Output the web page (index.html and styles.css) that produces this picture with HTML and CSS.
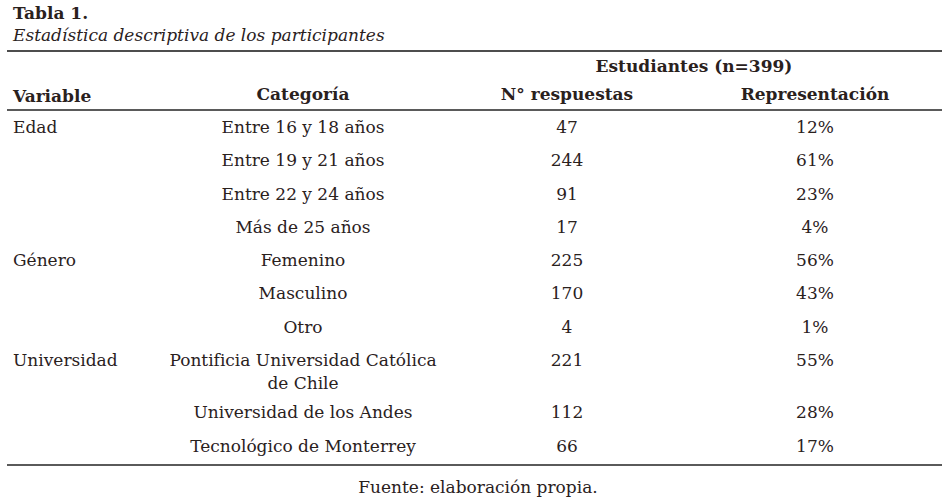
FILE: index.html
```html
<!DOCTYPE html>
<html lang="es">
<head>
<meta charset="utf-8">
<link rel="stylesheet" href="styles.css">
<title>Tabla 1</title>
</head>
<body>
<div class="page">
  <div class="caption">
    <div class="cap-title">Tabla 1.</div>
    <div class="cap-sub">Estadística descriptiva de los participantes</div>
  </div>
  <table class="tbl">
    <colgroup>
      <col class="c1"><col class="c2"><col class="c3"><col class="c4">
    </colgroup>
    <thead>
      <tr class="h1">
        <th></th><th></th>
        <th colspan="2" class="group">Estudiantes (n=399)</th>
      </tr>
      <tr class="h2">
        <th class="left var">Variable</th>
        <th>Categoría</th>
        <th>N° respuestas</th>
        <th>Representación</th>
      </tr>
    </thead>
    <tbody>
      <tr><td class="left">Edad</td><td>Entre 16 y 18 años</td><td>47</td><td>12%</td></tr>
      <tr><td class="left"></td><td>Entre 19 y 21 años</td><td>244</td><td>61%</td></tr>
      <tr><td class="left"></td><td>Entre 22 y 24 años</td><td>91</td><td>23%</td></tr>
      <tr><td class="left"></td><td>Más de 25 años</td><td>17</td><td>4%</td></tr>
      <tr><td class="left">Género</td><td>Femenino</td><td>225</td><td>56%</td></tr>
      <tr><td class="left"></td><td>Masculino</td><td>170</td><td>43%</td></tr>
      <tr><td class="left"></td><td>Otro</td><td>4</td><td>1%</td></tr>
      <tr class="tall"><td class="left">Universidad</td><td>Pontificia Universidad Católica<br>de Chile</td><td>221</td><td>55%</td></tr>
      <tr><td class="left"></td><td>Universidad de los Andes</td><td>112</td><td>28%</td></tr>
      <tr class="last"><td class="left"></td><td>Tecnológico de Monterrey</td><td>66</td><td>17%</td></tr>
    </tbody>
  </table>
  <div class="source">Fuente: elaboración propia.</div>
</div>
</body>
</html>
```

FILE: styles.css
```css
html, body {
  margin: 0;
  padding: 0;
  background: #ffffff;
}
body {
  font-family: "DejaVu Serif", "Liberation Serif", serif;
  color: #2a211d;
  font-size: 17px;
}
.page {
  padding: 2px 8px 0 7px;
  width: 935px;
}
.caption {
  padding-left: 6px;
  line-height: 22px;
}
.cap-title {
  font-weight: bold;
}
.cap-sub {
  font-style: italic;
}
.tbl {
  width: 935px;
  border-collapse: collapse;
  border-top: 2px solid #4d4d4d;
  border-bottom: 2px solid #5a5a5a;
  margin-top: 4px;
}
.c1 { width: 153px; }
.c2 { width: 286px; }
.c3 { width: 242px; }
.c4 { width: 254px; }
th, td {
  text-align: center;
  line-height: 23px;
  padding: 5px 0 5.3px;
  vertical-align: top;
}
th { font-weight: bold; }
.h1 th { padding: 3px 0 0; }
.h2 th { padding: 5px 0 3px; border-bottom: 2px solid #5a5a5a; }
.h2 th.var { padding-top: 7px; padding-bottom: 1px; }
th.left, td.left {
  text-align: left;
  padding-left: 6px;
}
.tall td { padding-bottom: 1px; }
.last td { padding-top: 6px; padding-bottom: 6px; }
.source {
  text-align: center;
  width: 942px;
  padding-top: 10px;
  line-height: 23px;
}
```
